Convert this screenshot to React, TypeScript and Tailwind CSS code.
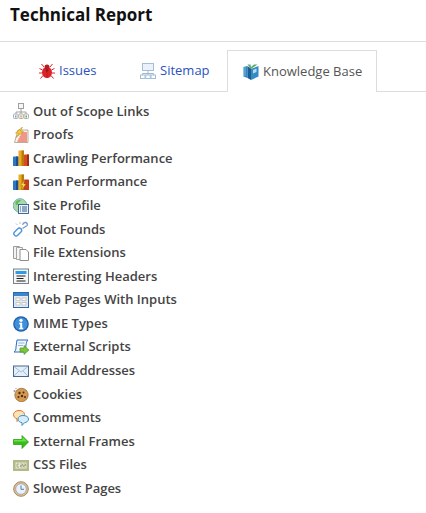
import type { ReactNode } from "react";

// ── icons, 16x16 ────────────────────────────────────────────────────────
function Icon({ children }: { children: ReactNode }) {
  return (
    <svg viewBox="0 0 16 16" className="w-4 h-4 shrink-0">
      {children}
    </svg>
  );
}

const BugIcon = () => (
  <Icon>
    <path
      d="M5 4 2.500 1M11 4l2.500-3M3.500 7 .5 5.500M12.500 7l3-1.500M3 10H0M13 10h3M4 12.500 1.500 15.500M12 12.500l2.500 3"
      stroke="#d62a30"
      strokeWidth="1"
      fill="none"
    />
    <ellipse cx="8" cy="9.500" rx="5" ry="5.500" fill="#dc2329" />
    <circle cx="8" cy="4" r="2.500" fill="#b31d22" />
    <circle cx="8" cy="7.500" r="1.300" fill="#8f1a1d" />
    <path d="M8 8v7" stroke="#a31c20" strokeWidth=".7" />
  </Icon>
);

const SitemapIcon = () => (
  <Icon>
    <rect x="2.500" y=".5" width="11" height="7" fill="#eaf1fa" stroke="#a3bedd" />
    <path d="M8 7.500v3M2.500 12v-1.500h11V12M8 10.500V12" stroke="#a9b4c0" fill="none" />
    <rect x=".5" y="12" width="4.500" height="3.500" fill="#fff" stroke="#a3bedd" />
    <rect x="5.800" y="12" width="4.500" height="3.500" fill="#fff" stroke="#a3bedd" />
    <rect x="11" y="12" width="4.500" height="3.500" fill="#fff" stroke="#a3bedd" />
  </Icon>
);

const BooksIcon = () => (
  <Icon>
    <path d="M.5 3 4.500 2v12l-4-1.500z" fill="#2f86c6" />
    <path d="M2 3v9" stroke="#8cc4e8" strokeWidth=".8" />
    <path d="M4.500 2 8 4.500V16l-3.500-2z" fill="#1d5c90" />
    <path d="M4.500.5h3L8 3l3-2.500h3.500L8 5z" fill="#5cab6a" />
    <path d="M8 5 15.500 2v10.500L8 16z" fill="#338bc6" />
    <path d="M10 6l3.500-1.500V8L10 9.500z" fill="#b5dcf2" />
  </Icon>
);

const ScopeIcon = () => (
  <Icon>
    <rect x="5.500" y=".5" width="5" height="5" fill="#f7f7f7" stroke="#a0a0a0" />
    <path d="M8 5.500V9M3 11V9h10v2M8 9v2" stroke="#a0a0a0" fill="none" />
    <rect x=".5" y="11" width="4.500" height="4.500" rx=".8" fill="#f7f7f7" stroke="#b0b0b0" />
    <rect x="5.800" y="11" width="4.500" height="4.500" rx=".8" fill="#f7f7f7" stroke="#b0b0b0" />
    <rect x="11" y="11" width="4.500" height="4.500" rx=".8" fill="#f7f7f7" stroke="#b0b0b0" />
    <rect x="2" y="12.500" width="1.500" height="2" fill="#6aa5dc" />
    <rect x="7.300" y="12.500" width="1.500" height="2" fill="#e8a33d" />
    <rect x="12.500" y="12.500" width="1.500" height="2" fill="#63b34f" />
  </Icon>
);

const ProofsIcon = () => (
  <Icon>
    <path d="M5 3h10v12.500H1.500z" fill="#fdf6e6" stroke="#a89a80" strokeWidth=".8" />
    <path d="M8 6h6M7.500 8h6.500M6.500 10h7.500M5.500 12h8.500M4.500 14h9.500" stroke="#e0392c" strokeWidth="1" />
    <path d="M9.500 0 2.500 6l3.500.5L3 10.500 10.500 4.500 7.500 4z" fill="#f6cb2e" stroke="#b5821a" strokeWidth=".5" />
  </Icon>
);

const CrawlIcon = () => (
  <Icon>
    <rect x="0" y="6.500" width="5.500" height="9.500" rx=".6" fill="#2c78c4" />
    <rect x="3" y="6.500" width="2.500" height="9.500" fill="#1a4f8a" />
    <rect x="5.500" y=".5" width="5.500" height="15.500" rx=".6" fill="#eeaa1e" />
    <rect x="8.500" y=".5" width="2.500" height="15.500" fill="#b97b10" />
    <rect x="11" y="4.500" width="5" height="11.500" rx=".6" fill="#d84a20" />
    <rect x="14" y="4.500" width="2" height="11.500" fill="#9c2f16" />
  </Icon>
);

const ScanIcon = () => (
  <Icon>
    <rect x="0" y="6.500" width="5.500" height="9.500" rx=".6" fill="#2c78c4" />
    <rect x="3" y="6.500" width="2.500" height="9.500" fill="#1a4f8a" />
    <rect x="5.500" y=".5" width="5.500" height="15.500" rx=".6" fill="#eeaa1e" />
    <rect x="8.500" y=".5" width="2.500" height="15.500" fill="#b97b10" />
    <rect x="11" y="5.500" width="5" height="10.500" rx=".6" fill="#c63f1c" />
    <path d="M11.500 6.500 7.500 11.500h2.300L8.500 16l4.500-6h-2.300z" fill="#ffe24a" stroke="#9c6e14" strokeWidth=".4" />
  </Icon>
);

const ProfileIcon = () => (
  <Icon>
    <circle cx="7" cy="7.500" r="6.800" fill="#a6dca2" stroke="#74aebb" />
    <path d="M2.500 4c2-2 4-2.500 5.500-1.500-1 2-3 1-3 3s-2 2.500-2.500 0z" fill="#66b85f" />
    <rect x="5.500" y="6.500" width="10" height="9" fill="#eef2f7" stroke="#2f5c8f" strokeWidth=".9" />
    <path d="M7 9h1M9 9h5M7 11h1M9 11h5M7 13h1M9 13h5" stroke="#2f5c8f" strokeWidth="1" />
  </Icon>
);

const LinkIcon = () => (
  <Icon>
    <rect
      x="2.500"
      y="6.500"
      width="4.500"
      height="9"
      rx="2.250"
      transform="rotate(45 4.750 11)"
      fill="none"
      stroke="#4f95dc"
      strokeWidth="1.400"
    />
    <path d="M9.500 7.500 13.800 4.800c1.500-1.300.2-3.600-1.800-3.300-1.300.2-2 1.200-2.500 2.300" fill="none" stroke="#7f9dc4" strokeWidth="1.400" />
    <path d="M7 3V1M4.500 4 3 2.500" stroke="#bdbdbd" strokeWidth="1" />
  </Icon>
);

const FilesIcon = () => (
  <Icon>
    <path d="M.5 1.500h6v12h-6z" fill="#f2f2f2" stroke="#9c9c9c" />
    <path d="M3.500 2.500h6v12h-6z" fill="#f7f7f7" stroke="#a5a5a5" />
    <path d="M7 4.500h6l2.500 2.500v8.500H7z" fill="#fff" stroke="#8e8e8e" />
  </Icon>
);

const HeadersIcon = () => (
  <Icon>
    <rect x=".5" y="1" width="15" height="14.500" fill="#f5f5f5" stroke="#78818c" />
    <rect x="2.500" y="3" width="11" height="3" fill="#2f9be8" />
    <path d="M3.500 8h9M3.500 10.500h7M3.500 13h9" stroke="#1c1c1c" strokeWidth="1" />
  </Icon>
);

const FormIcon = () => (
  <Icon>
    <rect x=".5" y=".5" width="15" height="15" fill="#e6e9ed" stroke="#2c68ae" />
    <rect x="1" y="1" width="14" height="3" fill="#3a87cf" />
    <rect x="3" y="6" width="4" height="2.500" fill="#fff" stroke="#b0b0b0" strokeWidth=".6" />
    <rect x="9" y="6" width="4" height="2.500" fill="#fff" stroke="#b0b0b0" strokeWidth=".6" />
    <rect x="3" y="10.500" width="4" height="2.500" fill="#fff" stroke="#b0b0b0" strokeWidth=".6" />
    <rect x="9" y="10.500" width="4" height="2.500" fill="#fff" stroke="#b0b0b0" strokeWidth=".6" />
  </Icon>
);

const InfoIcon = () => (
  <Icon>
    <circle cx="8" cy="8" r="7.800" fill="#1f5fa8" />
    <circle cx="8" cy="8" r="6.500" fill="#3f8fdc" />
    <circle cx="8" cy="4.300" r="1.600" fill="#fff" />
    <path d="M6.200 6.800h3v5h1v1.500H6.200v-1.500h1v-3.500h-1z" fill="#fff" />
  </Icon>
);

const ScriptIcon = () => (
  <Icon>
    <path d="M4 1h11c-1.500 1-1.500 3-2 5l-1 7H1c1.500-1 2-2 2-5z" fill="#f4f8fd" stroke="#2a6fbe" />
    <path d="M5.500 4h6M5 6.500h5" stroke="#7aa6d6" strokeWidth=".8" />
    <path d="M7 9h4V6.500l5 4.500-5 4.500V13H7z" fill="#7cc63c" stroke="#3f8a1e" strokeWidth=".6" />
  </Icon>
);

const MailIcon = () => (
  <Icon>
    <rect x=".5" y="3" width="15" height="10.500" fill="#e3eef9" stroke="#47688c" />
    <path d="M1 3.500 8 9l7-5.500M1 13l5-5M15 13l-5-5" fill="none" stroke="#93b2d2" strokeWidth=".8" />
  </Icon>
);

const CookieIcon = () => (
  <Icon>
    <circle cx="8.500" cy="9" r="6.700" fill="#d49a52" stroke="#8f6230" strokeWidth=".7" />
    <circle cx="6.500" cy="7" r="1.200" fill="#4a2c14" />
    <circle cx="10.500" cy="6.500" r="1" fill="#4a2c14" />
    <circle cx="9" cy="10" r="1.200" fill="#4a2c14" />
    <circle cx="5.500" cy="11" r="1" fill="#4a2c14" />
    <circle cx="12" cy="11" r="1" fill="#4a2c14" />
    <circle cx="1.500" cy="5" r="1" fill="#999" />
    <circle cx="3" cy="2.500" r=".7" fill="#aaa" />
  </Icon>
);

const CommentsIcon = () => (
  <Icon>
    <path d="M6 .5c3 0 5.500 1.500 5.500 4S9 9 6.500 9L4 11.500V8.800C2 8.200.5 6.700.5 4.500S3 .5 6 .5z" fill="#fbe3b8" stroke="#e0762c" />
    <path d="M10 5.500c3 0 5.500 1.300 5.500 3.500s-2 3.500-4 3.700L9 15.500v-2.800C6.500 12.300 5 11 5 9s2-3.500 5-3.500z" fill="#d7edfb" stroke="#3f8fc9" />
  </Icon>
);

const ArrowIcon = () => (
  <Icon>
    <path d="M.5 5.500H9V1.500L15.500 8 9 14.500v-4H.5z" fill="#35c018" stroke="#2a9412" strokeWidth=".7" />
    <path d="M1 6h8.500V3l4.500 4.500H1z" fill="#6fe04a" />
  </Icon>
);

const CssIcon = () => (
  <Icon>
    <rect y="3" width="16" height="11" fill="#b5b888" />
    <rect x="2.500" y="5.500" width="11" height="6" fill="#e8e9d6" />
    <path d="M4 7h2M4 10h2M4 7v3M7.500 7h2v1.500h-2V10h2M10.500 7h2v1.500h-2V10h2" fill="none" stroke="#8c8f62" strokeWidth=".7" />
  </Icon>
);

const ClockIcon = () => (
  <Icon>
    <circle cx="8" cy="8" r="7.300" fill="#dcc094" stroke="#a8895e" />
    <circle cx="8" cy="8" r="5.300" fill="#eaf1fa" stroke="#7f95b0" strokeWidth=".6" />
    <path d="M8 4.500V8.300H11" fill="none" stroke="#5a7ba6" strokeWidth="1" />
  </Icon>
);

const ITEMS: { label: string; icon: ReactNode }[] = [
  { label: "Out of Scope Links", icon: <ScopeIcon /> },
  { label: "Proofs", icon: <ProofsIcon /> },
  { label: "Crawling Performance", icon: <CrawlIcon /> },
  { label: "Scan Performance", icon: <ScanIcon /> },
  { label: "Site Profile", icon: <ProfileIcon /> },
  { label: "Not Founds", icon: <LinkIcon /> },
  { label: "File Extensions", icon: <FilesIcon /> },
  { label: "Interesting Headers", icon: <HeadersIcon /> },
  { label: "Web Pages With Inputs", icon: <FormIcon /> },
  { label: "MIME Types", icon: <InfoIcon /> },
  { label: "External Scripts", icon: <ScriptIcon /> },
  { label: "Email Addresses", icon: <MailIcon /> },
  { label: "Cookies", icon: <CookieIcon /> },
  { label: "Comments", icon: <CommentsIcon /> },
  { label: "External Frames", icon: <ArrowIcon /> },
  { label: "CSS Files", icon: <CssIcon /> },
  { label: "Slowest Pages", icon: <ClockIcon /> },
];

function Tab({
  icon,
  label,
  active,
  className,
}: {
  icon: ReactNode;
  label: string;
  active?: boolean;
  className: string;
}) {
  return (
    <div
      className={`h-[42px] flex items-center gap-[4px] ${className} ${
        active
          ? "border border-b-0 border-[#dddddd] bg-white text-[#555555] -mb-px"
          : "text-[#2a52be]"
      }`}
    >
      {icon}
      <span>{label}</span>
    </div>
  );
}

export default function App() {
  return (
    <div className="w-[426px] h-[513px] bg-white overflow-hidden font-['Open_Sans',sans-serif]">
      <header className="h-[42px] border-b border-[#dddddd] pl-[10px] pt-[3px]">
        <h1 className="text-[17px] leading-[24px] font-bold text-[#111111]">Technical Report</h1>
      </header>
      <nav className="mt-2 h-[42px] border-b border-[#dddddd] flex text-[13px]">
        <Tab className="ml-[39px] w-[101px]" icon={<BugIcon />} label="Issues" />
        <Tab className="w-[87px]" icon={<SitemapIcon />} label="Sitemap" />
        <Tab className="w-[150px] pl-[15px]" active icon={<BooksIcon />} label="Knowledge Base" />
      </nav>
      <ul className="pl-[13px] pt-[7.5px]">
        {ITEMS.map((item) => (
          <li
            key={item.label}
            className="h-[23.6px] flex items-center gap-[4px] text-[13px] font-semibold text-[#444444]"
          >
            {item.icon}
            <span>{item.label}</span>
          </li>
        ))}
      </ul>
    </div>
  );
}
